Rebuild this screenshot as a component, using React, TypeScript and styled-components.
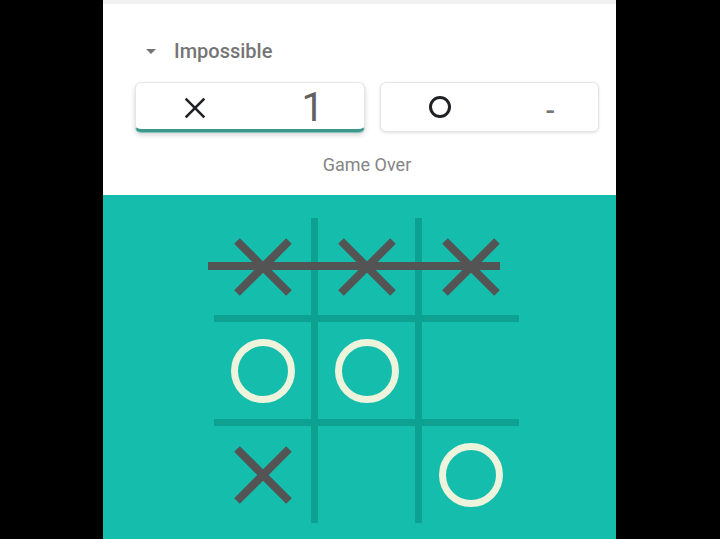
import styled, { createGlobalStyle } from 'styled-components'

type Mark = 'x' | 'o' | null

const board: Mark[] = ['x', 'x', 'x', 'o', 'o', null, 'x', null, 'o']

const GlobalStyle = createGlobalStyle`
  html, body {
    margin: 0;
    padding: 0;
    background: #000;
  }
  body {
    font-family: Roboto, "Noto Sans", Arial, sans-serif;
  }
`

export default function App() {
  return (
    <>
      <GlobalStyle />
      <Screen>
        <Panel>
          <Header>
            <Difficulty>
              <Caret />
              <span>Impossible</span>
            </Difficulty>
            <Scores>
              <ScoreCard $active $width={230}>
                <CrossIcon size={22} stroke={2.6} color="#202124" />
                <Score>1</Score>
              </ScoreCard>
              <ScoreCard $width={219}>
                <NoughtIcon size={22} stroke={3} color="#202124" />
                <Dash>-</Dash>
              </ScoreCard>
            </Scores>
            <Status>Game Over</Status>
          </Header>
          <BoardArea>
            <Grid>
              {board.map((mark, i) => (
                <Cell key={i}>
                  {mark === 'x' && <CrossIcon size={60} stroke={8} color="#545454" square />}
                  {mark === 'o' && <NoughtIcon size={64} stroke={7} color="#eef3dc" />}
                </Cell>
              ))}
              <WinLine width="320" height="20" viewBox="0 0 320 20">
                <line x1="0" y1="10" x2="292" y2="10" stroke="#545454" strokeWidth="8" />
              </WinLine>
            </Grid>
          </BoardArea>
        </Panel>
      </Screen>
    </>
  )
}

function CrossIcon({ size, stroke, color, square = false }: { size: number; stroke: number; color: string; square?: boolean }) {
  const p = square ? stroke / 2 : stroke
  return (
    <svg width={size} height={size} viewBox={`0 0 ${size} ${size}`}>
      <g stroke={color} strokeWidth={stroke} strokeLinecap={square ? 'butt' : 'square'}>
        <line x1={p} y1={p} x2={size - p} y2={size - p} />
        <line x1={size - p} y1={p} x2={p} y2={size - p} />
      </g>
    </svg>
  )
}

function NoughtIcon({ size, stroke, color }: { size: number; stroke: number; color: string }) {
  return (
    <svg width={size} height={size} viewBox={`0 0 ${size} ${size}`}>
      <circle cx={size / 2} cy={size / 2} r={(size - stroke) / 2} fill="none" stroke={color} strokeWidth={stroke} />
    </svg>
  )
}

const Screen = styled.div`
  width: 720px;
  height: 539px;
  overflow: hidden;
  background: #000;
`

const Panel = styled.div`
  margin-left: 103px;
  width: 513px;
  height: 539px;
  display: flex;
  flex-direction: column;
  background: #fff;
  border-top: 4px solid #f1f1f1;
  box-sizing: border-box;
`

const Header = styled.div`
  height: 191px;
  padding: 32px 17px 0 32px;
  box-sizing: border-box;
  display: flex;
  flex-direction: column;
`

const Difficulty = styled.div`
  display: flex;
  align-items: center;
  gap: 18px;
  padding-left: 11px;
  height: 30px;
  font-size: 20px;
  font-weight: 500;
  color: #757575;
`

const Caret = styled.span`
  width: 0;
  height: 0;
  border-left: 5px solid transparent;
  border-right: 5px solid transparent;
  border-top: 5px solid #757575;
`

const Scores = styled.div`
  display: flex;
  gap: 15px;
  margin-top: 16px;
`

const ScoreCard = styled.div<{ $active?: boolean; $width: number }>`
  width: ${p => p.$width}px;
  height: 50px;
  box-sizing: border-box;
  border: 1px solid #e6e6e6;
  border-radius: 6px;
  display: flex;
  align-items: center;
  justify-content: space-between;
  padding: ${p => (p.$active ? '4px 40px 0 48px' : '0 43px 0 48px')};
  background: #fff;
  ${p =>
    p.$active
      ? `border-bottom: 3px solid #3c978d;
         box-shadow: 0 3px 5px rgba(0, 0, 0, 0.18), 0 1px 0 #9fe3da;`
      : `box-shadow: 0 1px 3px rgba(0, 0, 0, 0.12);`}
`

const Score = styled.span`
  font-size: 40px;
  font-weight: 400;
  color: #616161;
  line-height: 1;
`

const Dash = styled.span`
  font-size: 28px;
  font-weight: 500;
  color: #757575;
  margin-top: 6px;
`

const Status = styled.div`
  margin-top: 22px;
  text-align: center;
  font-size: 18px;
  color: #858585;
`

const BoardArea = styled.div`
  flex: 1;
  background: #14bdac;
  display: flex;
  justify-content: center;
  padding: 23px 0 0 14px;
`

const Grid = styled.div`
  position: relative;
  display: grid;
  grid-template-columns: repeat(3, 97px);
  grid-template-rows: repeat(3, 97px);
  gap: 7px;
  background: #0da192;
  align-self: flex-start;
`

const Cell = styled.div`
  background: #14bdac;
  display: flex;
  align-items: center;
  justify-content: center;
`

const WinLine = styled.svg`
  position: absolute;
  left: -6px;
  top: 38px;
`
